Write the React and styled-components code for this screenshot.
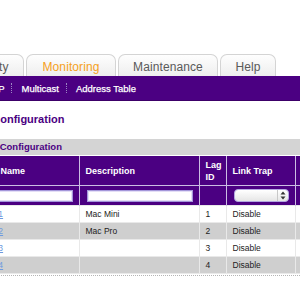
import styled, { createGlobalStyle } from 'styled-components'

const GlobalStyle = createGlobalStyle`
  html, body {
    margin: 0;
    padding: 0;
    overflow: hidden;
    background: #fff;
    font-family: "Liberation Sans", Arial, sans-serif;
  }
`

const PURPLE = '#4b0082'

const tabs = ['Security', 'Monitoring', 'Maintenance', 'Help']
const tabWidths = { Security: 75, Monitoring: 90, Maintenance: 100, Help: 56 }

const rows = [
  { name: 'LAG 1', description: 'Mac Mini', id: 1, trap: 'Disable' },
  { name: 'LAG 2', description: 'Mac Pro', id: 2, trap: 'Disable' },
  { name: 'LAG 3', description: '', id: 3, trap: 'Disable' },
  { name: 'LAG 4', description: '', id: 4, trap: 'Disable' },
]

const SelectArrows = () => (
  <svg width="6" height="9" viewBox="0 0 6 9">
    <path d="M3 0.5 L5.5 3.5 L0.5 3.5 Z" fill="#333" />
    <path d="M3 8.5 L5.5 5.5 L0.5 5.5 Z" fill="#333" />
  </svg>
)

const App = () => {
  return (
    <>
      <GlobalStyle />
      <Page>
        <TabRow>
          {tabs.map((t) => (
            <Tab key={t} $active={t === 'Monitoring'} $width={tabWidths[t]}>
              {t}
            </Tab>
          ))}
        </TabRow>
        <SubNav>
          <NavItem>STP</NavItem>
          <NavSep />
          <NavItem>Multicast</NavItem>
          <NavSep />
          <NavItem>Address Table</NavItem>
        </SubNav>
        <PageTitle>LAG Configuration</PageTitle>
        <SectionBar>LAG Configuration</SectionBar>
        <LagTable>
          <colgroup>
            <col style={{ width: 106 }} />
            <col style={{ width: 120 }} />
            <col style={{ width: 27 }} />
            <col style={{ width: 69 }} />
            <col style={{ width: 100 }} />
          </colgroup>
          <thead>
            <tr>
              <HeadCell>LAG Name</HeadCell>
              <HeadCell>Description</HeadCell>
              <HeadCell>Lag ID</HeadCell>
              <HeadCell>Link Trap</HeadCell>
              <HeadCell $pad={10}>Admin Mode</HeadCell>
            </tr>
            <FilterRow>
              <FilterCell>
                <TextBox />
              </FilterCell>
              <FilterCell>
                <TextBox />
              </FilterCell>
              <FilterCell />
              <FilterCell>
                <FakeSelect>
                  <SelectValue />
                  <SelectButton>
                    <SelectArrows />
                  </SelectButton>
                </FakeSelect>
              </FilterCell>
              <FilterCell />
            </FilterRow>
          </thead>
          <tbody>
            {rows.map((r, i) => (
              <DataRow key={r.id} $striped={i % 2 === 1}>
                <Cell>
                  <NameLink href="#">{r.name}</NameLink>
                </Cell>
                <Cell>{r.description}</Cell>
                <Cell>{r.id}</Cell>
                <Cell>{r.trap}</Cell>
                <Cell />
              </DataRow>
            ))}
          </tbody>
        </LagTable>
        <TableFoot />
      </Page>
    </>
  )
}

export default App

const Page = styled.div`
  width: 430px;
  margin-left: -56px;
  padding-top: 53px;
`

const TabRow = styled.div`
  display: flex;
  align-items: flex-end;
  gap: 2px;
  height: 23px;
  padding-left: 5px;
`

const Tab = styled.div`
  width: ${(p) => p.$width}px;
  height: 22px;
  box-sizing: border-box;
  border: 1px solid #d4d4d4;
  border-bottom: none;
  border-radius: 7px 7px 0 0;
  background: linear-gradient(#fefefe, #eeeeee);
  display: flex;
  align-items: center;
  justify-content: center;
  padding-top: 2px;
  font-size: 12px;
  letter-spacing: 0.1px;
  color: ${(p) => (p.$active ? '#f5a11c' : '#5a5a5a')};
`

const SubNav = styled.div`
  display: flex;
  align-items: center;
  height: 24px;
  background: ${PURPLE};
  border-bottom: 1px solid #3c0068;
  padding-left: 33px;
`

const NavItem = styled.div`
  color: #fff;
  font-size: 9.5px;
  padding: 0 7px 0 9px;
  -webkit-text-stroke: 0.25px #fff;
`

const NavSep = styled.div`
  width: 0;
  height: 10px;
  border-left: 1px dotted #9c86c4;
`

const PageTitle = styled.h1`
  margin: 0;
  padding: 11px 0 13px 22px;
  font-size: 11px;
  line-height: 14px;
  font-weight: bold;
  color: ${PURPLE};
`

const SectionBar = styled.div`
  height: 16px;
  line-height: 16px;
  background: #d4d4d4;
  padding-left: 33px;
  font-size: 9.5px;
  font-weight: bold;
  color: ${PURPLE};
`

const LagTable = styled.table`
  margin: 1px 0 0 29px;
  border-collapse: collapse;
  table-layout: fixed;
  width: 422px;
`

const HeadCell = styled.th`
  height: 29px;
  background: ${PURPLE};
  color: #fff;
  font-size: 9px;
  font-weight: bold;
  text-align: left;
  padding: 0 0 0 ${(p) => p.$pad || 6}px;
  line-height: 12px;
  border-left: 1px solid #cbbde3;
  border-right: 1px solid #cbbde3;
  &:first-child {
    border-left: none;
  }
`

const FilterRow = styled.tr`
  border-top: 1px solid #cbbde3;
`

const FilterCell = styled.td`
  height: 20px;
  box-sizing: border-box;
  background: ${PURPLE};
  padding: 0 6px 0 7px;
  border-left: 1px solid #cbbde3;
  border-right: 1px solid #cbbde3;
  vertical-align: middle;
  &:first-child {
    border-left: none;
  }
`

const TextBox = styled.div`
  height: 12px;
  box-sizing: border-box;
  background: #fff;
  border: 1px solid #a497da;
  box-shadow: inset 0 0 0 1px #e4def6;
`

const FakeSelect = styled.div`
  display: flex;
  width: 55px;
  height: 13px;
  box-sizing: border-box;
  border: 1px solid #b3a8e0;
  border-radius: 4px;
  background: linear-gradient(#ffffff, #e6e6e6);
  overflow: hidden;
`

const SelectValue = styled.div`
  flex: 1;
`

const SelectButton = styled.div`
  width: 10px;
  border-left: 1px solid #c8c8c8;
  display: flex;
  align-items: center;
  justify-content: center;
`

const DataRow = styled.tr`
  background: ${(p) => (p.$striped ? '#cfcfcf' : '#fff')};
`

const Cell = styled.td`
  height: 17px;
  box-sizing: border-box;
  padding: 0 0 0 6px;
  font-size: 8.5px;
  color: #222;
  white-space: nowrap;
  overflow: hidden;
  border: 1px solid #e9e9e9;
  &:first-child {
    border-left: none;
  }
`

const NameLink = styled.a`
  color: #6d9be0;
  text-decoration: underline;
`

const TableFoot = styled.div`
  margin-top: 1px;
  border-top: 1px dotted #b5b5b5;
  height: 20px;
`
